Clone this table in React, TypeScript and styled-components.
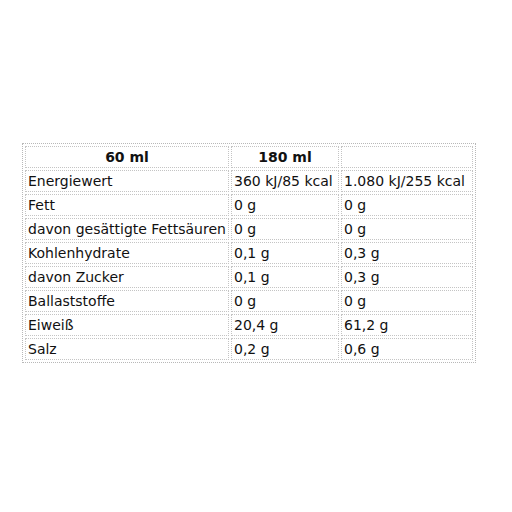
import styled, { createGlobalStyle } from 'styled-components';

const GlobalStyle = createGlobalStyle`
  html, body {
    margin: 0;
    padding: 0;
    background: #ffffff;
  }
`;

const Page = styled.div`
  width: 512px;
  height: 512px;
  box-sizing: border-box;
  padding: 143px 0 0 22px;
`;

const Table = styled.table`
  border: 1px dotted #b8b8b8;
  border-spacing: 2px;
  font-family: 'DejaVu Sans', Verdana, sans-serif;
  font-size: 14px;
  line-height: 18px;
  color: #111;
`;

const Column = styled.col<{ $w: number }>`
  width: ${(p) => p.$w}px;
`;

const HeadCell = styled.th`
  border: 1px dotted #c4c4c4;
  padding: 1px 2px;
  height: 18px;
  font-weight: bold;
  text-align: center;
`;

const Cell = styled.td`
  border: 1px dotted #c4c4c4;
  padding: 1px 1px 1px 2px;
  height: 18px;
  white-space: nowrap;
  text-align: left;
`;

const columns = [204, 108, 132];

const rows: [string, string, string][] = [
  ['Energiewert', '360 kJ/85 kcal', '1.080 kJ/255 kcal'],
  ['Fett', '0 g', '0 g'],
  ['davon gesättigte Fettsäuren', '0 g', '0 g'],
  ['Kohlenhydrate', '0,1 g', '0,3 g'],
  ['davon Zucker', '0,1 g', '0,3 g'],
  ['Ballaststoffe', '0 g', '0 g'],
  ['Eiweiß', '20,4 g', '61,2 g'],
  ['Salz', '0,2 g', '0,6 g'],
];

const App = () => {
  return (
    <Page>
      <GlobalStyle />
      <Table>
        <colgroup>
          {columns.map((w, i) => (
            <Column key={i} $w={w} />
          ))}
        </colgroup>
        <thead>
          <tr>
            <HeadCell>60 ml</HeadCell>
            <HeadCell>180 ml</HeadCell>
            <HeadCell />
          </tr>
        </thead>
        <tbody>
          {rows.map((row) => (
            <tr key={row[0]}>
              {row.map((value, i) => (
                <Cell key={i}>{value}</Cell>
              ))}
            </tr>
          ))}
        </tbody>
      </Table>
    </Page>
  );
};

export default App;
